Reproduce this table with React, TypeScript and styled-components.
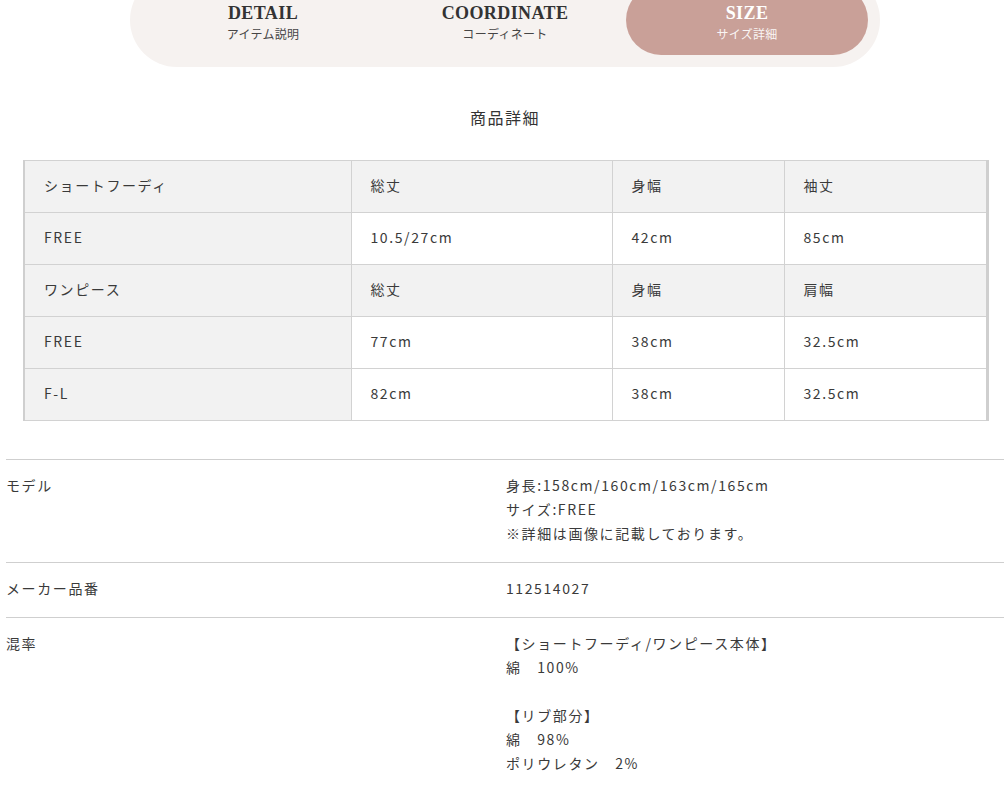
import React from 'react';
import styled, { createGlobalStyle } from 'styled-components';

const GlobalStyle = createGlobalStyle`
  html, body {
    margin: 0;
    padding: 0;
    background: #fff;
    overflow: hidden;
  }
  body {
    font-family: "Noto Sans CJK JP", "Noto Sans", sans-serif;
    color: #333;
  }
`;

const Page = styled.div`
  width: 998px;
  padding-left: 6px;
`;

const TabBar = styled.nav`
  width: 750px;
  margin: -27px auto 0;
  padding: 12px;
  box-sizing: border-box;
  display: grid;
  grid-template-columns: repeat(3, 1fr);
  background: #f6f2f0;
  border-radius: 47px;
`;

const Tab = styled.div<{ active?: boolean }>`
  height: 70px;
  border-radius: 35px;
  display: flex;
  flex-direction: column;
  align-items: center;
  justify-content: center;
  padding-top: 5px;
  box-sizing: border-box;
  background: ${(p) => (p.active ? '#c9a098' : 'transparent')};
  color: ${(p) => (p.active ? '#fff' : '#333')};
`;

const TabTitle = styled.span`
  font-family: "Liberation Serif", "DejaVu Serif", serif;
  font-weight: 700;
  font-size: 18px;
  letter-spacing: 0.4px;
  line-height: 20px;
`;

const TabSub = styled.span`
  font-size: 12px;
  line-height: 16px;
  margin-top: 3px;
  letter-spacing: 0.3px;
  opacity: 0.9;
`;

const Heading = styled.h2`
  margin: 39px 0 0;
  text-align: center;
  font-size: 16px;
  font-weight: 400;
  letter-spacing: 1.5px;
  line-height: 22px;
`;

const SizeTable = styled.table`
  margin: 32px 16px 0 17px;
  width: 966px;
  border-collapse: collapse;
  table-layout: fixed;
  border-left: 2px solid #cfcfcf;
  border-right: 3px solid #cfcfcf;
`;

const Cell = styled.td<{ shaded?: boolean }>`
  height: 52px;
  padding: 0 0 3px 19px;
  border: 1px solid #d2d2d2;
  background: ${(p) => (p.shaded ? '#f2f2f2' : '#fff')};
  font-size: 14px;
  letter-spacing: 1.6px;
  color: #3a3a3a;
  vertical-align: middle;
  box-sizing: border-box;
`;

const Specs = styled.dl`
  margin: 38px 0 0;
`;

const SpecRow = styled.div`
  display: grid;
  grid-template-columns: 500px 1fr;
  border-top: 1px solid #cfcfcf;
  padding: 13px 0 17px;
  font-size: 14px;
  line-height: 24px;
  letter-spacing: 1.6px;
  color: #3a3a3a;
`;

const SpecLabel = styled.dt`
  margin: 0;
`;

const SpecValue = styled.dd`
  margin: 0;
  white-space: pre-line;
`;

const tabs = [
  { title: 'DETAIL', sub: 'アイテム説明' },
  { title: 'COORDINATE', sub: 'コーディネート' },
  { title: 'SIZE', sub: 'サイズ詳細', active: true },
];

const rows: { cells: string[]; header?: boolean }[] = [
  { cells: ['ショートフーディ', '総丈', '身幅', '袖丈'], header: true },
  { cells: ['FREE', '10.5/27cm', '42cm', '85cm'] },
  { cells: ['ワンピース', '総丈', '身幅', '肩幅'], header: true },
  { cells: ['FREE', '77cm', '38cm', '32.5cm'] },
  { cells: ['F-L', '82cm', '38cm', '32.5cm'] },
];

const specs = [
  { label: 'モデル', value: '身長:158cm/160cm/163cm/165cm\nサイズ:FREE\n※詳細は画像に記載しております。' },
  { label: 'メーカー品番', value: '112514027' },
  {
    label: '混率',
    value: '【ショートフーディ/ワンピース本体】\n綿　100%\n\u00a0\n【リブ部分】\n綿　98%\nポリウレタン　2%',
  },
];

export default function App() {
  return (
    <Page>
      <GlobalStyle />
      <TabBar>
        {tabs.map((t) => (
          <Tab key={t.title} active={t.active}>
            <TabTitle>{t.title}</TabTitle>
            <TabSub>{t.sub}</TabSub>
          </Tab>
        ))}
      </TabBar>

      <Heading>商品詳細</Heading>

      <SizeTable>
        <colgroup>
          <col style={{ width: 327 }} />
          <col style={{ width: 261 }} />
          <col style={{ width: 172 }} />
          <col />
        </colgroup>
        <tbody>
          {rows.map((r, i) => (
            <tr key={i}>
              {r.cells.map((c, j) => (
                <Cell key={j} shaded={r.header || j === 0}>
                  {c}
                </Cell>
              ))}
            </tr>
          ))}
        </tbody>
      </SizeTable>

      <Specs>
        {specs.map((s) => (
          <SpecRow key={s.label}>
            <SpecLabel>{s.label}</SpecLabel>
            <SpecValue>{s.value}</SpecValue>
          </SpecRow>
        ))}
      </Specs>
    </Page>
  );
}
